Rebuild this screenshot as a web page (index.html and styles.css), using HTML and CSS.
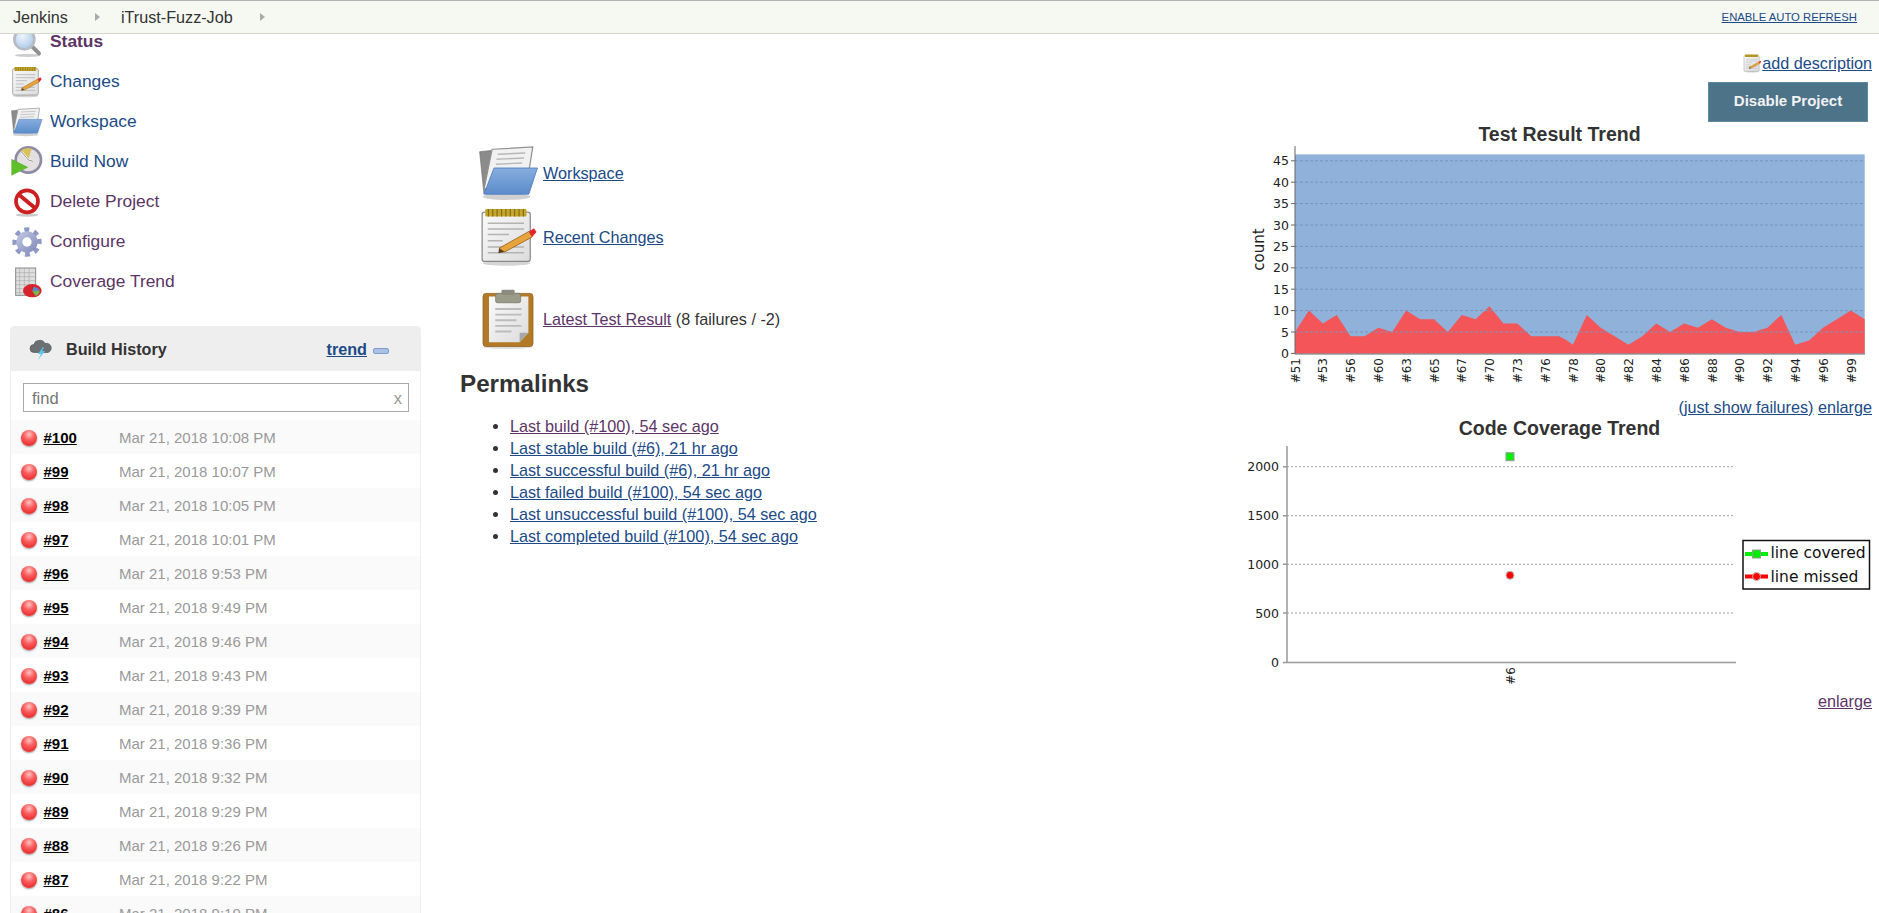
FILE: index.html
```html
<!DOCTYPE html>
<html lang="en">
<head>
<meta charset="utf-8">
<title>iTrust-Fuzz-Job [Jenkins]</title>
<link rel="stylesheet" href="styles.css">
</head>
<body>
<svg class="defs" width="0" height="0" aria-hidden="true">
  <defs>
    <linearGradient id="gFolder" x1="0" y1="0" x2="0" y2="1"><stop offset="0" stop-color="#86aedd"/><stop offset="1" stop-color="#5b8ccb"/></linearGradient>
    <linearGradient id="gPaper" x1="0" y1="0" x2="1" y2="1"><stop offset="0" stop-color="#fafafa"/><stop offset="1" stop-color="#dcdcdc"/></linearGradient>
    <linearGradient id="gGear" x1="0" y1="0" x2="1" y2="1"><stop offset="0" stop-color="#c5cbe4"/><stop offset="1" stop-color="#7d88b8"/></linearGradient>
    <radialGradient id="gLens" cx=".4" cy=".35" r=".7"><stop offset="0" stop-color="#eef5fc"/><stop offset="1" stop-color="#a9c6e8"/></radialGradient>
    <symbol id="i-search" viewBox="0 0 48 48">
      <ellipse cx="25" cy="44" rx="19" ry="2.5" fill="#ccc"/>
      <line x1="30" y1="29" x2="42" y2="41" stroke="#8f8f8f" stroke-width="6" stroke-linecap="round"/>
      <circle cx="20" cy="20" r="15" fill="url(#gLens)" stroke="#b5bcc4" stroke-width="4"/>
    </symbol>
    <symbol id="i-notepad" viewBox="0 0 48 48">
      <ellipse cx="22" cy="45" rx="19" ry="2" fill="#d4d4d4"/>
      <rect x="2.5" y="4" width="38.5" height="39.5" rx="2" fill="url(#gPaper)" stroke="#8a8a8a"/>
      <rect x="5" y="1.5" width="33" height="6" rx="1" fill="#c4a62c"/>
      <path d="M7.5 1.5v6M11 1.5v6M14.500 1.500v6M18 1.500v6M21.500 1.500v6M25 1.500v6M28.500 1.500v6M32 1.500v6M35.500 1.500v6" stroke="#7f6a13" stroke-width=".9"/>
      <path d="M7 13h29M7 17.500h29M7 22h17M7 27h12M7 32h29M7 36.500h29" stroke="#b3b3b3" stroke-width="1.200"/>
      <path d="M16 33l24-13.500 2.500 4.500-22 12z" fill="#e8a33a" stroke="#8a5a14" stroke-width=".6"/>
      <path d="M16 33l4.500 3-5 1z" fill="#5a4020"/>
      <path d="M40 19.500l4-2.500 2 3-3.500 4z" fill="#e5262a"/>
    </symbol>
    <symbol id="i-folder" viewBox="0 0 48 48">
      <ellipse cx="22" cy="43" rx="19" ry="2.500" fill="#d0d0d0"/>
      <path d="M0.500 7l9-1 1 3-5 30-1.500 2z" fill="#8b8b8b" stroke="#6f6f6f" stroke-width=".5"/>
      <path d="M10.500 5L43 3.200 40 22 4 37z" fill="#f1f1f1" stroke="#909090"/>
      <path d="M15 9l22-1M14 13l22-1M13.500 17l21-1" stroke="#b8b8b8" stroke-width="1.100"/>
      <path d="M12 20h34.700L40 40.500q-.3.500-1 .5H4.800q-.8 0-.5-1z" fill="url(#gFolder)" stroke="#4f7fbf" stroke-width=".7"/>
    </symbol>
    <symbol id="i-build" viewBox="0 0 48 48">
      <circle cx="26" cy="21" r="19" fill="#e2e1e0" stroke="#8d8ba6" stroke-width="4"/>
      <path d="M26 21L14 8a17 17 0 0 1 17-4z" fill="#d9c25c"/>
      <path d="M26 21L16 9M26 21l7 2" stroke="#fff" stroke-width="3"/>
      <path d="M26 21L16 9M26 21l7 2" stroke="#555" stroke-width="1"/>
      <path d="M1 20l24 12L1 44z" fill="#5fbf2a" stroke="#3f9a18" stroke-width=".6"/>
    </symbol>
    <symbol id="i-delete" viewBox="0 0 48 48">
      <ellipse cx="24" cy="43.500" rx="17" ry="2.500" fill="#ccc"/>
      <circle cx="24" cy="23" r="16.500" fill="#fff" stroke="#cc1f1f" stroke-width="5.500"/>
      <line x1="12" y1="13" x2="36" y2="33" stroke="#cc1f1f" stroke-width="6"/>
    </symbol>
    <symbol id="i-gear" viewBox="0 0 48 48">
      <circle cx="24" cy="24" r="18.500" fill="none" stroke="#8f99c6" stroke-width="7" stroke-dasharray="7.300 7.230" transform="rotate(-14 24 24)"/>
      <circle cx="24" cy="24" r="16" fill="url(#gGear)"/>
      <circle cx="24" cy="24" r="7" fill="#fff"/>
    </symbol>
    <symbol id="i-coverage" viewBox="0 0 48 48">
      <rect x="7" y="3" width="30" height="41" fill="#dedede" stroke="#8a8a8a" stroke-width="1.500"/>
      <path d="M7 10h30M7 16h30M7 22h30M7 28h30M7 34h30M7 40h30M13 3v41M20 3v41M27 3v41" stroke="#a0a0a0" stroke-width=".8"/>
      <ellipse cx="32" cy="37" rx="14" ry="10" fill="#d8232a"/>
      <path d="M32 38l2-7a14 9 0 0 1 9 6z" fill="#4f8fcf"/>
      <path d="M32 38l11-1a14 9 0 0 1-6 8z" fill="#7ab648"/>
    </symbol>
    <symbol id="i-clipboard" viewBox="0 0 48 48">
      <ellipse cx="23" cy="46.500" rx="19" ry="1.500" fill="#ddd"/>
      <rect x="3.200" y="3.500" width="40" height="42.500" rx="2.500" fill="#b27a26" stroke="#8f601a" stroke-width=".6"/>
      <path d="M8 6h31.500v29l-7 7.500H8z" fill="url(#gPaper)"/>
      <path d="M32.500 42.500V35h7z" fill="#a8a8a8"/>
      <rect x="13.300" y="3.500" width="20" height="7.500" rx="1.500" fill="#9b9b8a" stroke="#77776a" stroke-width=".6"/>
      <rect x="18" y="0.500" width="10.500" height="4" rx="1" fill="#8b8b7d"/>
      <path d="M13 16h21M13 20.500h21M13 25h17M13 29.500h21M13 34h13" stroke="#bcbcbc" stroke-width="1.500"/>
    </symbol>
    <symbol id="i-weather" viewBox="0 0 24 24">
      <path d="M5 15.500a4 4 0 0 1 0-8 5 5 0 0 1 4.500-4 6 6 0 0 1 6.500 3 4.500 4.500 0 0 1 3 9z" fill="#6d7072" stroke="#4a4c4e" stroke-width=".6"/>
      <path d="M14 10l-5 7h3l-3 6 7-9h-3l2-4z" fill="#55c8f2"/>
    </symbol>
  </defs>
</svg>

<header class="crumbs">
  <a class="crumb">Jenkins</a><span class="crumb-arrow"></span>
  <a class="crumb crumb-job">iTrust-Fuzz-Job</a><span class="crumb-arrow"></span>
  <a class="refresh" href="#r">ENABLE AUTO REFRESH</a>
</header>

<main class="page">
  <aside class="side">
    <nav class="tasks">
      <a class="task visited strong" href="#a"><svg class="task-icon"><use href="#i-search"/></svg><span>Status</span></a>
      <a class="task" href="#b"><svg class="task-icon"><use href="#i-notepad"/></svg><span>Changes</span></a>
      <a class="task" href="#c"><svg class="task-icon"><use href="#i-folder"/></svg><span>Workspace</span></a>
      <a class="task" href="#d"><svg class="task-icon"><use href="#i-build"/></svg><span>Build Now</span></a>
      <a class="task visited" href="#e"><svg class="task-icon"><use href="#i-delete"/></svg><span>Delete Project</span></a>
      <a class="task visited" href="#f"><svg class="task-icon"><use href="#i-gear"/></svg><span>Configure</span></a>
      <a class="task visited" href="#g"><svg class="task-icon"><use href="#i-coverage"/></svg><span>Coverage Trend</span></a>
    </nav>
    <section class="history">
      <div class="history-head">
        <svg class="weather"><use href="#i-weather"/></svg>
        <span class="history-title">Build History</span>
        <a class="trend" href="#t">trend</a>
        <span class="minus"></span>
      </div>
      <div class="search"><div class="search-box"><span>find</span><span class="search-x">x</span></div></div>
      <div class="row"><span class="ball"></span><a class="build" href="#100">#100</a><span class="date">Mar 21, 2018 10:08 PM</span></div>
      <div class="row"><span class="ball"></span><a class="build" href="#99">#99</a><span class="date">Mar 21, 2018 10:07 PM</span></div>
      <div class="row"><span class="ball"></span><a class="build" href="#98">#98</a><span class="date">Mar 21, 2018 10:05 PM</span></div>
      <div class="row"><span class="ball"></span><a class="build" href="#97">#97</a><span class="date">Mar 21, 2018 10:01 PM</span></div>
      <div class="row"><span class="ball"></span><a class="build" href="#96">#96</a><span class="date">Mar 21, 2018 9:53 PM</span></div>
      <div class="row"><span class="ball"></span><a class="build" href="#95">#95</a><span class="date">Mar 21, 2018 9:49 PM</span></div>
      <div class="row"><span class="ball"></span><a class="build" href="#94">#94</a><span class="date">Mar 21, 2018 9:46 PM</span></div>
      <div class="row"><span class="ball"></span><a class="build" href="#93">#93</a><span class="date">Mar 21, 2018 9:43 PM</span></div>
      <div class="row"><span class="ball"></span><a class="build" href="#92">#92</a><span class="date">Mar 21, 2018 9:39 PM</span></div>
      <div class="row"><span class="ball"></span><a class="build" href="#91">#91</a><span class="date">Mar 21, 2018 9:36 PM</span></div>
      <div class="row"><span class="ball"></span><a class="build" href="#90">#90</a><span class="date">Mar 21, 2018 9:32 PM</span></div>
      <div class="row"><span class="ball"></span><a class="build" href="#89">#89</a><span class="date">Mar 21, 2018 9:29 PM</span></div>
      <div class="row"><span class="ball"></span><a class="build" href="#88">#88</a><span class="date">Mar 21, 2018 9:26 PM</span></div>
      <div class="row"><span class="ball"></span><a class="build" href="#87">#87</a><span class="date">Mar 21, 2018 9:22 PM</span></div>
      <div class="row"><span class="ball"></span><a class="build" href="#86">#86</a><span class="date">Mar 21, 2018 9:19 PM</span></div>
    </section>
  </aside>

  <section class="center">
    <h1 class="job-title">Project iTrust-Fuzz-Job</h1>
    <div class="links">
      <div class="link-row first"><svg class="big-icon"><use href="#i-folder"/></svg><a href="#w">Workspace</a></div>
      <div class="link-row second"><svg class="big-icon"><use href="#i-notepad"/></svg><a href="#rc">Recent Changes</a></div>
      <div class="link-row third"><svg class="big-icon"><use href="#i-clipboard"/></svg><span><a class="visited" href="#lt">Latest Test Result</a> (8 failures / -2)</span></div>
    </div>
    <h2 class="perma-title">Permalinks</h2>
    <ul class="perma">
      <li><a class="visited" href="#p1">Last build (#100), 54 sec ago</a></li>
      <li><a href="#p2">Last stable build (#6), 21 hr ago</a></li>
      <li><a href="#p3">Last successful build (#6), 21 hr ago</a></li>
      <li><a href="#p4">Last failed build (#100), 54 sec ago</a></li>
      <li><a href="#p5">Last unsuccessful build (#100), 54 sec ago</a></li>
      <li><a href="#p6">Last completed build (#100), 54 sec ago</a></li>
    </ul>
  </section>

  <section class="right">
    <div class="add-desc"><svg class="add-icon"><use href="#i-notepad"/></svg><a href="#ad">add description</a></div>
    <div class="btn-line"><button class="disable" type="button">Disable Project</button></div>
    <h3 class="chart-title">Test Result Trend</h3>
    <svg class="chart chart-tests" viewBox="1240 145 639 250">
      <g transform="translate(1295 352.4) scale(13.895 -4.28)">
        <rect class="area-blue" x="0" y="0" width="41" height="46.500"/>
        <polygon class="area-red" points="0,0 0,5 1,10 2,7 3,9 4,4 5,4 6,6 7,5 8,10 9,8 10,8 11,5 12,9 13,8 14,11 15,7 16,7 17,4 18,4 19,4 19.500,3.200 20,2 21,9 22,6 23,4 24,2 24.500,3 25,4 26,7 27,5 28,7 29,6 30,8 31,6 32,5 33,5 34,6 35,9 36,2 37,3 38,6 39,8 40,10 41,8 41,0"/>
      </g>
      <path class="grid-on" d="M1295 159.800H1865M1295 181.200H1865M1295 202.600H1865M1295 224H1865M1295 245.400H1865M1295 266.800H1865M1295 288.200H1865M1295 309.600H1865M1295 331H1865"/>
      <path class="axis" d="M1295 145V353H1865M1291 159.800h4M1291 181.200h4M1291 202.600h4M1291 224h4M1291 245.400h4M1291 266.800h4M1291 288.200h4M1291 309.600h4M1291 331h4M1291 352.400h4"/>
      <g class="tick-y">
        <text x="1289" y="164.300">45</text><text x="1289" y="185.700">40</text><text x="1289" y="207.100">35</text><text x="1289" y="228.500">30</text><text x="1289" y="249.900">25</text><text x="1289" y="271.300">20</text><text x="1289" y="292.700">15</text><text x="1289" y="314.100">10</text><text x="1289" y="335.500">5</text><text x="1289" y="356.900">0</text>
      </g>
      <text class="axis-name" transform="translate(1264 248.500) rotate(-90)">count</text>
      <g class="tick-x">
        <text transform="translate(1299.500 357) rotate(-90)">#51</text>
        <text transform="translate(1327.300 357) rotate(-90)">#53</text>
        <text transform="translate(1355.100 357) rotate(-90)">#56</text>
        <text transform="translate(1382.900 357) rotate(-90)">#60</text>
        <text transform="translate(1410.700 357) rotate(-90)">#63</text>
        <text transform="translate(1438.500 357) rotate(-90)">#65</text>
        <text transform="translate(1466.300 357) rotate(-90)">#67</text>
        <text transform="translate(1494.100 357) rotate(-90)">#70</text>
        <text transform="translate(1521.900 357) rotate(-90)">#73</text>
        <text transform="translate(1549.700 357) rotate(-90)">#76</text>
        <text transform="translate(1577.500 357) rotate(-90)">#78</text>
        <text transform="translate(1605.300 357) rotate(-90)">#80</text>
        <text transform="translate(1633.100 357) rotate(-90)">#82</text>
        <text transform="translate(1660.900 357) rotate(-90)">#84</text>
        <text transform="translate(1688.700 357) rotate(-90)">#86</text>
        <text transform="translate(1716.500 357) rotate(-90)">#88</text>
        <text transform="translate(1744.300 357) rotate(-90)">#90</text>
        <text transform="translate(1772.100 357) rotate(-90)">#92</text>
        <text transform="translate(1799.900 357) rotate(-90)">#94</text>
        <text transform="translate(1827.700 357) rotate(-90)">#96</text>
        <text transform="translate(1855.500 357) rotate(-90)">#99</text>
      </g>
    </svg>
    <div class="chart-links"><a href="#f">(just show failures)</a> <a href="#en">enlarge</a></div>
    <h3 class="chart-title second-title">Code Coverage Trend</h3>
    <svg class="chart chart-cover" viewBox="1240 440 639 250">
      <path class="grid-off" d="M1287 465.700H1735M1287 514.700H1735M1287 563.300H1735M1287 612H1735"/>
      <path class="axis-light" d="M1287 445V661.500H1736M1283 465.700h4M1283 514.700h4M1283 563.300h4M1283 612h4M1283 661.500h4"/>
      <g class="tick-y">
        <text x="1279" y="470.200">2000</text><text x="1279" y="519.200">1500</text><text x="1279" y="567.800">1000</text><text x="1279" y="616.500">500</text><text x="1279" y="666">0</text>
      </g>
      <rect class="pt-green" x="1506" y="451.700" width="8" height="8"/>
      <circle class="pt-red" cx="1510" cy="574.300" r="4"/>
      <g class="tick-x"><text transform="translate(1514.500 666) rotate(-90)">#6</text></g>
      <rect class="legend-box" x="1743" y="539.500" width="126.500" height="48.500"/>
      <line class="line-green" x1="1745" y1="553" x2="1768" y2="553"/>
      <rect class="pt-green" x="1752.500" y="549" width="8" height="8"/>
      <line class="line-red" x1="1745" y1="575.500" x2="1768" y2="575.500"/>
      <circle class="pt-red" cx="1756.500" cy="575.500" r="4"/>
      <text class="legend-text" x="1770.500" y="557">line covered</text>
      <text class="legend-text" x="1770.500" y="580.500">line missed</text>
    </svg>
    <div class="chart-links chart-links-last"><a class="visited" href="#en2">enlarge</a></div>
  </section>
</main>
</body>
</html>
```

FILE: styles.css
```css
html, body {
  margin: 0;
  height: 100%;
  overflow: hidden;
  background: #fff;
}
body {
  display: flex;
  flex-direction: column;
  font-family: "Liberation Sans", Arial, sans-serif;
  font-size: 16.200px;
  color: #333;
}
a { color: #204a87; }
a.visited { color: #5c3566; }
.defs { position: absolute; }

.crumbs {
  flex: none;
  position: relative;
  z-index: 2;
  box-sizing: border-box;
  height: 34px;
  display: flex;
  align-items: center;
  padding: 0 22px 0 13px;
  background: #f6f9f2;
  border-top: 1px solid #b3b3b3;
  border-bottom: 1px solid #d3d7cf;
  font-size: 16.200px;
}
.crumb { color: #333; }
.crumb-arrow {
  width: 0;
  height: 0;
  margin-left: 27px;
  border-left: 5px solid #a9a9a9;
  border-top: 4.500px solid transparent;
  border-bottom: 4.500px solid transparent;
}
.crumb-job { margin-left: 21px; }
.refresh {
  margin-left: auto;
  font-size: 11.300px;
}

.page {
  flex: 1;
  min-height: 0;
  overflow: hidden;
  display: flex;
}
.side {
  flex: none;
  width: 440px;
  box-sizing: border-box;
  padding-left: 11px;
}
.tasks {
  margin-top: -13px;
  display: flex;
  flex-direction: column;
  font-size: 17.400px;
}
.task {
  height: 40px;
  display: flex;
  align-items: center;
  gap: 7px;
  text-decoration: none;
}
.task.strong { font-weight: bold; }
.task-icon {
  flex: none;
  width: 32px;
  height: 32px;
  margin-top: 2px;
}

.history {
  width: 411px;
  box-sizing: border-box;
  margin-top: 25px;
  margin-left: -1px;
  border: 1px solid #eee;
  border-radius: 4px;
}
.history-head {
  height: 44px;
  display: flex;
  align-items: center;
  background: #eee;
  font-size: 16.200px;
}
.weather {
  flex: none;
  width: 24px;
  height: 24px;
  margin-left: 18px;
}
.history-title {
  margin-left: 13px;
  font-weight: bold;
}
.trend {
  margin-left: auto;
  font-weight: bold;
}
.minus {
  box-sizing: border-box;
  width: 16px;
  height: 6px;
  margin: 4px 31px 0 6px;
  background: #a9c1e6;
  border: 1px solid #7f9dc9;
  border-radius: 2px;
}
.search {
  height: 49px;
  padding: 12px 12px 0;
  box-sizing: border-box;
}
.search-box {
  box-sizing: border-box;
  width: 386px;
  height: 29px;
  display: flex;
  align-items: center;
  justify-content: space-between;
  padding: 1px 6px 0 8px;
  border: 1px solid #a9a9a9;
  font-size: 16.500px;
  color: #757575;
}
.search-x { color: #999; }
.row {
  height: 34px;
  display: flex;
  align-items: center;
  font-size: 15px;
}
.row:nth-of-type(odd) { background: #fafafa; }
.ball {
  flex: none;
  width: 16px;
  height: 16px;
  margin: 1px 0 0 10px;
  border-radius: 50%;
  background: radial-gradient(circle at 50% 28%, #ffc4c4 0, #fb5f5f 38%, #ea2f2f 78%, #c92424 100%);
  box-shadow: 0 1px 2px #999;
}
.build {
  width: 75.500px;
  margin-left: 6.500px;
  font-weight: bold;
  color: #000;
}
.date { color: #999; }

.center {
  flex: 1;
  min-width: 0;
  padding-left: 20px;
}
.job-title {
  margin: -35px 0 0 1px;
  font-size: 31px;
  line-height: 36px;
  white-space: nowrap;
}
.links { margin-left: 19px; }
.link-row {
  display: flex;
  align-items: center;
  gap: 4px;
}
.link-row.first { margin-top: 108px; }
.link-row.second { margin-top: 4px; }
.link-row.third { margin-top: 22px; }
.big-icon {
  flex: none;
  width: 60px;
  height: 60px;
}
.perma-title {
  margin: 21px 0 0;
  font-size: 24.200px;
  line-height: 28px;
}
.perma {
  margin: 17px 0 0;
  padding: 0 0 0 50px;
  line-height: 22px;
}

.right {
  flex: none;
  width: 639px;
  display: flex;
  flex-direction: column;
  box-sizing: border-box;
}
.add-desc {
  display: flex;
  justify-content: flex-end;
  align-items: center;
  height: 20px;
  margin-top: 19px;
  padding-right: 7px;
}
.add-icon {
  width: 19px;
  height: 19px;
}
.btn-line {
  display: flex;
  justify-content: flex-end;
  margin-top: 9px;
  padding-right: 11px;
}
.disable {
  width: 160px;
  height: 40px;
  padding: 0 0 4px;
  background: #4d7389;
  border: 1px solid #5d8aa3;
  color: #f2f2f2;
  font: bold 15px "Liberation Sans", Arial, sans-serif;
}
.chart-title {
  margin: 0;
  height: 24px;
  text-align: center;
  font-size: 19.500px;
  line-height: 24px;
}
.second-title { margin: -2px 0 1px; }
.chart {
  display: block;
  width: 639px;
  height: 250px;
  flex: none;
}
.chart-links {
  height: 22px;
  line-height: 22px;
  text-align: right;
  padding-right: 7px;
}
.chart-links-last { margin-top: -1px; }

.area-blue { fill: #8fb1da; }
.area-red { fill: #f45558; }
.grid-on { stroke: #7795c0; stroke-width: 1; stroke-dasharray: 3 2; fill: none; }
.grid-off { stroke: #a0a0a0; stroke-width: 1; stroke-dasharray: 2 2; fill: none; }
.axis { stroke: #666; stroke-width: 1; fill: none; }
.axis-light { stroke: #999; stroke-width: 1.500; fill: none; }
.tick-y text {
  font: 12.500px "DejaVu Sans", sans-serif;
  fill: #222;
  text-anchor: end;
}
.tick-x text {
  font: 12px "DejaVu Sans", sans-serif;
  fill: #222;
  text-anchor: end;
}
.axis-name {
  font: 15px "DejaVu Sans", sans-serif;
  fill: #222;
  text-anchor: middle;
}
.pt-green { fill: #00ee00; stroke: #999; stroke-width: 1; }
.pt-red { fill: #f00; stroke: #bbb; stroke-width: 1; }
.legend-box { fill: #fff; stroke: #111; stroke-width: 1.500; }
.line-green { stroke: #00ee00; stroke-width: 4; }
.line-red { stroke: #f00; stroke-width: 4; }
.legend-text {
  font: 15.500px "DejaVu Sans", sans-serif;
  fill: #111;
}
```
